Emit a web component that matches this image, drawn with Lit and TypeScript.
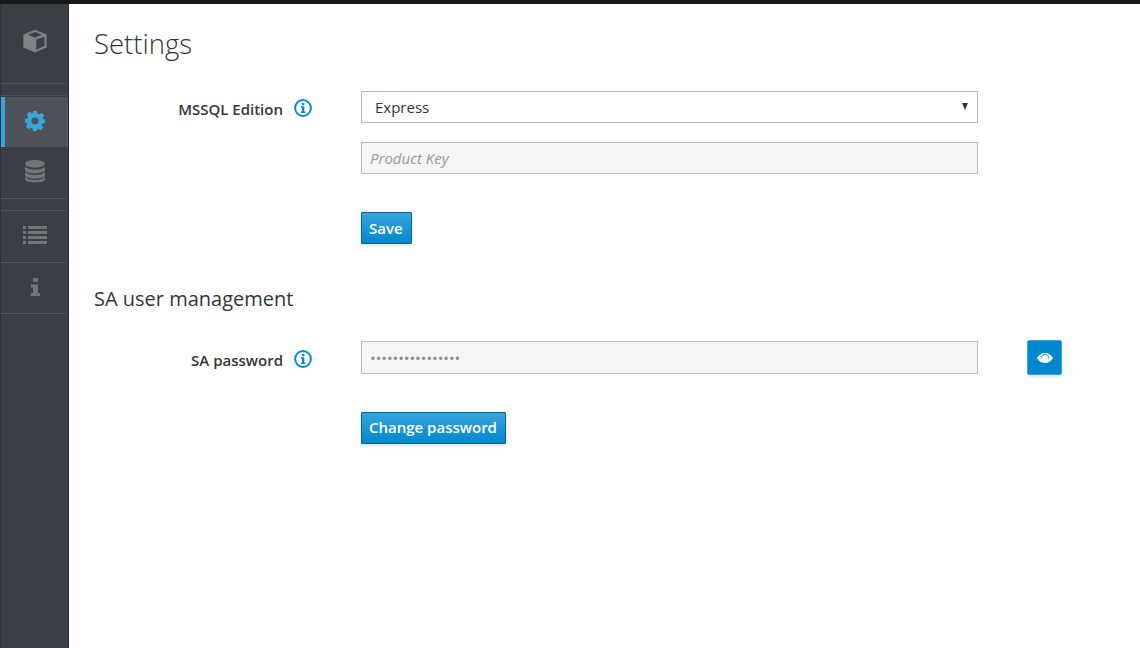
import { LitElement, html, css, svg } from "lit";
import { customElement } from "lit/decorators.js";

const infoIcon = html`<svg class="info" viewBox="0 0 18 18" aria-hidden="true">
  <circle cx="9" cy="9" r="7.900" fill="none" stroke="#0b88ce" stroke-width="2"/>
  <rect x="7.900" y="3.900" width="2.400" height="2.300" fill="#0b88ce"/>
  <path d="M6.900 7.300h3.400v5.200h1v1.600H6.900v-1.600h1v-3.600h-1z" fill="#0b88ce"/>
</svg>`;

const cube = svg`<path d="M12 .8 23.600 5.500v13L12 23.600.4 18.500v-13zM12 3 5 5.800l7 2.800 7-2.800zM13.200 10.700v10l8.200-3.600V7.500z" fill="#7e8285" fill-rule="evenodd"/>`;

@customElement("app-root")
export class AppRoot extends LitElement {
  static styles = css`
    :host {
      display: block;
      width: 1140px;
      height: 648px;
      overflow: hidden;
      background: #fff;
      font-family: "Open Sans", "Liberation Sans", sans-serif;
      color: #363636;
    }
    .top { height: 4px; background: #16181a; }
    .shell { display: flex; height: 644px; }
    .side {
      width: 69px;
      flex: none;
      box-sizing: border-box;
      background: #393f44;
      border-left: 1px solid #2f3438;
      border-right: 1px solid #292e31;
      display: flex;
      flex-direction: column;
    }
    .logo {
      height: 79px;
      flex: none;
      display: flex;
      align-items: center;
      justify-content: center;
      box-sizing: border-box;
      padding: 0 0 5px 0;
    }
    .logo svg { width: 24px; height: 24px; }
    .rule { height: 1px; flex: none; background: #4d5258; margin-right: 2px; }
    .gap { height: 11px; flex: none; }
    .item {
      display: flex;
      align-items: center;
      justify-content: center;
      flex: none;
      box-sizing: border-box;
      padding-left: 1px;
    }
    .item svg { display: block; }
    .active {
      height: 50px;
      margin: 1px 0;
      background: #4d5258;
      border-left: 4px solid #39a5dc;
      padding: 0 3px 2px 0;
    }
    .db { height: 50px; padding-bottom: 3px; }
    .list { height: 51px; padding-bottom: 2px; }
    .about { height: 50px; padding-bottom: 3px; }
    .main {
      flex: 1;
      min-width: 0;
      padding: 0 78px 0 25px;
    }
    h1 {
      margin: 0;
      padding-top: 21px;
      height: 87px;
      box-sizing: border-box;
      font-size: 27.500px;
      line-height: 38px;
      font-weight: 300;
      color: #363636;
    }
    .row {
      display: grid;
      grid-template-columns: 189px 18px 60px 617px 49px 35px;
      align-items: start;
    }
    .row label {
      font-size: 15px;
      font-weight: 600;
      line-height: 20px;
      text-align: right;
      padding-top: 8px;
      color: #363636;
    }
    .row .hint { grid-column: 2; padding-top: 7.500px; margin-left: 10.500px; width: 18px; }
    .info { width: 18px; height: 18px; display: block; }
    .field { grid-column: 4; }
    .select, .input {
      box-sizing: border-box;
      width: 617px;
      display: flex;
      align-items: center;
      border: 1px solid #bbb;
      font-size: 15px;
    }
    .select {
      height: 32px;
      padding: 0 9px 0 13px;
      justify-content: space-between;
      background: #fff;
      color: #363636;
    }
    .caret {
      width: 0;
      height: 0;
      border-left: 3.500px solid transparent;
      border-right: 3.500px solid transparent;
      border-top: 7px solid #363636;
      margin-top: -2px;
    }
    .input {
      height: 32px;
      padding: 0 8px;
      background: #f5f5f5;
    }
    .key { margin-top: 19px; font-style: italic; color: #999; }
    .pass { height: 33px; color: #8b8d8f; font-size: 15px; }
    .btn {
      display: inline-flex;
      align-items: center;
      justify-content: center;
      box-sizing: border-box;
      height: 32px;
      padding: 0 8px 0 7px;
      border: 1px solid #00659c;
      border-radius: 1px;
      background: linear-gradient(#39a5dc, #0088ce);
      color: #fff;
      font: 600 15px/20px "Open Sans", "Liberation Sans", sans-serif;
      box-shadow: 0 2px 3px rgba(3, 3, 3, 0.1);
    }
    .actions { padding-left: 267px; }
    .save { margin-top: 38px; }
    h2 {
      margin: 42px 0 0;
      font-size: 20px;
      line-height: 26px;
      font-weight: 400;
      color: #363636;
    }
    .sa { margin-top: 29px; }
    .sa label { padding-top: 9px; }
    .sa .hint { padding-top: 8.500px; }
    .eye {
      grid-column: 6;
      box-sizing: border-box;
      width: 35px;
      height: 35px;
      margin-top: -1px;
      background: #0088ce;
      border: 1px solid #39a5dc;
      border-radius: 2px;
      display: flex;
      align-items: center;
      justify-content: center;
      box-shadow: 0 2px 3px rgba(3, 3, 3, 0.12);
    }
    .eye svg { width: 16px; height: 12px; display: block; }
    .change { margin-top: 37px; }
    .change .btn { padding-bottom: 2px; }
  `;

  render() {
    return html`
      <div class="top"></div>
      <div class="shell">
        <nav class="side">
          <div class="logo"><svg viewBox="0 0 24 24" aria-hidden="true">${cube}</svg></div>
          <div class="rule"></div>
          <div class="gap"></div>
          <div class="rule"></div>
          <div class="item active">
            <svg width="20" height="20" viewBox="0 0 20 20" aria-hidden="true">
              <path fill="#39a5dc" fill-rule="evenodd" d="M8 0h4l.5 2.700 1.700.7 2.300-1.600 2.800 2.800-1.600 2.300.7 1.700L20 8v4l-2.600.5-.7 1.700 1.600 2.300-2.800 2.800-2.300-1.600-1.700.7L12 20H8l-.5-2.600-1.700-.7-2.300 1.600-2.800-2.800 1.600-2.300-.7-1.700L0 12V8l2.600-.5.7-1.700L1.700 3.500 4.500.7 6.800 2.300l1.700-.7zM10 6.500a3.500 3.500 0 1 0 0 7 3.500 3.500 0 0 0 0-7z"/>
            </svg>
          </div>
          <div class="item db">
            <svg width="20" height="23" viewBox="0 0 20 24" preserveAspectRatio="none" aria-hidden="true">
              <g fill="#72767b">
                <ellipse cx="10" cy="4" rx="10" ry="4"/>
                <path d="M0 7c2 2.200 6 3 10 3s8-.8 10-3v3.500c0 2-4.500 3.500-10 3.500S0 12.500 0 10.500z"/>
                <path d="M0 12.500c2 2.200 6 3 10 3s8-.8 10-3v3.500c0 2-4.500 3.500-10 3.500S0 18 0 16z"/>
                <path d="M0 17.800c2 2.200 6 3 10 3s8-.8 10-3V20c0 2-4.500 3.500-10 3.500S0 22 0 20z"/>
              </g>
            </svg>
          </div>
          <div class="rule"></div>
          <div class="gap"></div>
          <div class="rule"></div>
          <div class="item list">
            <svg width="24" height="19" viewBox="0 0 24 19" aria-hidden="true">
              <g fill="#72767b">
                <rect x="0" y="0" width="3" height="3"/><rect x="5" y="0" width="19" height="3"/>
                <rect x="0" y="5" width="3" height="3"/><rect x="5" y="5" width="19" height="3"/>
                <rect x="0" y="10" width="3" height="3"/><rect x="5" y="10" width="19" height="3"/>
                <rect x="0" y="15" width="3" height="3"/><rect x="5" y="15" width="19" height="3"/>
              </g>
            </svg>
          </div>
          <div class="rule"></div>
          <div class="item about">
            <svg width="9" height="18" viewBox="0 0 9 18" aria-hidden="true">
              <g fill="#72767b">
                <rect x="2" y="0" width="5" height="4"/>
                <path d="M0 6.500h7V15h2v3H0v-3h2v-5.500H0z"/>
              </g>
            </svg>
          </div>
          <div class="rule"></div>
        </nav>
        <main class="main">
          <h1>Settings</h1>
          <div class="row">
            <label>MSSQL Edition</label>
            <div class="hint">${infoIcon}</div>
            <div class="field">
              <div class="select"><span>Express</span><span class="caret"></span></div>
              <div class="input key">Product Key</div>
            </div>
          </div>
          <div class="actions save"><span class="btn">Save</span></div>
          <h2>SA user management</h2>
          <div class="row sa">
            <label>SA password</label>
            <div class="hint">${infoIcon}</div>
            <div class="field"><div class="input pass">••••••••••••••••</div></div>
            <div class="eye">
              <svg viewBox="0 0 16 12" aria-hidden="true">
                <path fill="#fff" d="M8 1c3.300 0 6.300 2 8 5-1.700 3-4.700 5-8 5S1.700 9 0 6c1.700-3 4.700-5 8-5z"/>
                <path d="M4.800 5.600A3.300 3.300 0 1 1 11.200 6.600" fill="none" stroke="#0088ce" stroke-width="1"/>
              </svg>
            </div>
          </div>
          <div class="actions change"><span class="btn">Change password</span></div>
        </main>
      </div>
    `;
  }
}
